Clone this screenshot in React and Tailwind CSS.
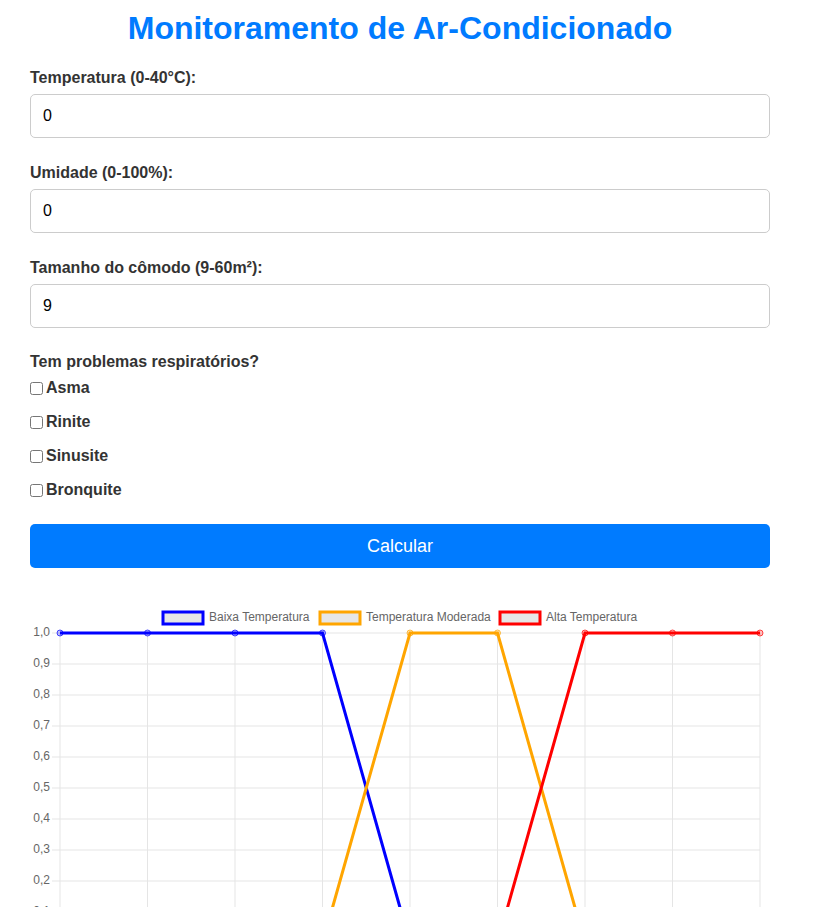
import React, { useState } from 'react';

const FIELDS = [
  { label: 'Temperatura (0-40°C):', value: '0' },
  { label: 'Umidade (0-100%):', value: '0' },
  { label: 'Tamanho do cômodo (9-60m²):', value: '9' },
];

const PROBLEMS = ['Asma', 'Rinite', 'Sinusite', 'Bronquite'];

const SERIES = [
  { name: 'Baixa Temperatura', color: '#0000ff', data: [1, 1, 1, 1, 0, 0, 0, 0, 0], legendX: 133 },
  { name: 'Temperatura Moderada', color: '#ffa500', data: [0, 0, 0, 0, 1, 1, 0, 0, 0], legendX: 290 },
  { name: 'Alta Temperatura', color: '#ff0000', data: [0, 0, 0, 0, 0, 0, 1, 1, 1], legendX: 470 },
];

const X0 = 30;
const XSTEP = 87.5;
const Y0 = 36;
const YSTEP = 31;

const px = (i) => X0 + i * XSTEP;
const py = (v) => Y0 + (1 - v) * 10 * YSTEP;

const Chart = () => {
  const ticks = Array.from({ length: 11 }, (_, k) => 1 - k / 10);
  return (
    <svg width="740" height="380" className="block mt-[29px]">
      {/* legend */}
      {SERIES.map(s => (
        <g key={s.name}>
          <rect x={s.legendX} y={15} width={40} height={12} fill="#e6e6e6" stroke={s.color} strokeWidth={3} />
          <text x={s.legendX + 46} y={21} dominantBaseline="middle" fontSize="12" fill="#666" fontFamily="Liberation Sans, Arial, sans-serif">
            {s.name}
          </text>
        </g>
      ))}

      {/* grid */}
      {ticks.map((v, k) => (
        <g key={k}>
          <line x1={22} x2={730} y1={Y0 + k * YSTEP} y2={Y0 + k * YSTEP} stroke="#e5e5e5" strokeWidth={1} />
          <text x={20} y={Y0 + k * YSTEP} textAnchor="end" dominantBaseline="middle" fontSize="12" fill="#666" fontFamily="Liberation Sans, Arial, sans-serif">
            {v.toFixed(1).replace('.', ',')}
          </text>
        </g>
      ))}
      {Array.from({ length: 9 }, (_, i) => (
        <g key={i}>
          <line x1={px(i)} x2={px(i)} y1={Y0} y2={py(0) + 8} stroke="#e5e5e5" strokeWidth={1} />
          <text x={px(i)} y={py(0) + 20} textAnchor="middle" fontSize="12" fill="#666" fontFamily="Liberation Sans, Arial, sans-serif">
            {i * 5}
          </text>
        </g>
      ))}

      {/* series */}
      {SERIES.map(s => (
        <g key={s.name}>
          <polyline
            points={s.data.map((v, i) => `${px(i)},${py(v)}`).join(' ')}
            fill="none"
            stroke={s.color}
            strokeWidth={3}
            strokeLinejoin="miter"
          />
          {s.data.map((v, i) => (
            <circle key={i} cx={px(i)} cy={py(v)} r={3} fill={s.color} fillOpacity={0.25} stroke={s.color} strokeOpacity={0.7} strokeWidth={1} />
          ))}
        </g>
      ))}
    </svg>
  );
};

const App = () => {
  const [values, setValues] = useState(FIELDS.map(f => f.value));

  return (
    <div className="min-h-screen bg-white font-['Liberation_Sans',Arial,sans-serif] text-[#333]">
      <div className="w-[740px] ml-[30px] pt-[10px]">
        <h1 className="text-[32px] leading-[37px] font-bold text-[#007bff] text-center mb-[20px]">
          Monitoramento de Ar-Condicionado
        </h1>

        {FIELDS.map((f, i) => (
          <div key={f.label}>
            <label className="block text-[16px] leading-[18px] font-bold pt-[2px] mb-[7px]">{f.label}</label>
            <input
              type="number"
              value={values[i]}
              onChange={e => setValues(v => v.map((x, j) => (j === i ? e.target.value : x)))}
              className="block w-full h-[44px] border border-[#ccc] rounded-[5px] px-[12px] text-[16px] text-black mb-[24px] outline-none [appearance:textfield] [&::-webkit-inner-spin-button]:appearance-none"
            />
          </div>
        ))}

        <div className="text-[16px] leading-[18px] font-bold pt-[1px] mb-[8px]">Tem problemas respiratórios?</div>
        <div className="flex flex-col gap-[16px]">
          {PROBLEMS.map(p => (
            <label key={p} className="flex items-center h-[18px] text-[16px] font-bold">
              <input type="checkbox" className="w-[13px] h-[13px] m-0 mr-[3px]" />
              {p}
            </label>
          ))}
        </div>

        <button className="block w-full h-[44px] mt-[25px] rounded-[5px] bg-[#007bff] text-white text-[18px]">
          Calcular
        </button>

        <Chart />
      </div>
    </div>
  );
};

export default App;
